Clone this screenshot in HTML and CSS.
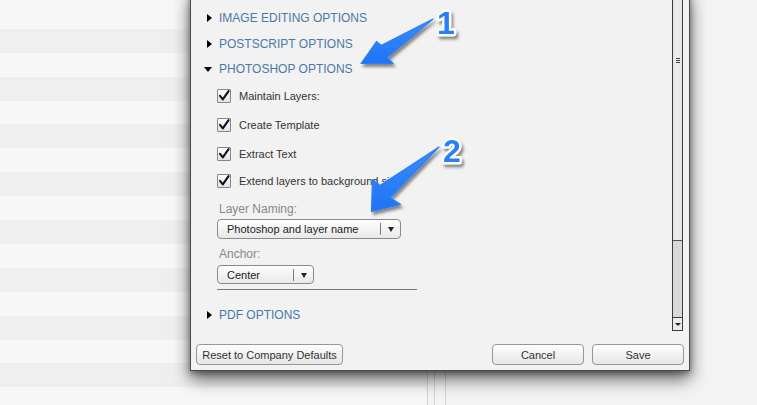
FILE: index.html
```html
<!DOCTYPE html>
<html>
<head>
<meta charset="utf-8">
<link rel="stylesheet" href="styles.css">
</head>
<body>
<div class="page">
  <div class="list"></div>
  <div class="splitter"></div>
  <div class="gutter"></div>
  <div class="main"></div>
</div>

<div class="dialog">
  <div class="panel">
    <div class="content">
      <div class="section"><span class="caret"><i class="tri-right"></i></span>IMAGE EDITING OPTIONS</div>
      <div class="section"><span class="caret"><i class="tri-right"></i></span>POSTSCRIPT OPTIONS</div>
      <div class="section section-open"><span class="caret"><i class="tri-down"></i></span>PHOTOSHOP OPTIONS</div>
      <div class="options">
        <label class="check"><span class="box"><svg width="14" height="14" viewBox="0 0 14 14"><path d="M3 6.8 L5.8 10.4 L11.6 2.2" fill="none" stroke="#111" stroke-width="2.1" stroke-linecap="round" stroke-linejoin="round"/></svg></span>Maintain Layers:</label>
        <label class="check"><span class="box"><svg width="14" height="14" viewBox="0 0 14 14"><path d="M3 6.8 L5.8 10.4 L11.6 2.2" fill="none" stroke="#111" stroke-width="2.1" stroke-linecap="round" stroke-linejoin="round"/></svg></span>Create Template</label>
        <label class="check"><span class="box"><svg width="14" height="14" viewBox="0 0 14 14"><path d="M3 6.8 L5.8 10.4 L11.6 2.2" fill="none" stroke="#111" stroke-width="2.1" stroke-linecap="round" stroke-linejoin="round"/></svg></span>Extract Text</label>
        <label class="check check-last"><span class="box"><svg width="14" height="14" viewBox="0 0 14 14"><path d="M3 6.8 L5.8 10.4 L11.6 2.2" fill="none" stroke="#111" stroke-width="2.1" stroke-linecap="round" stroke-linejoin="round"/></svg></span>Extend layers to background size</label>

        <div class="field-label">Layer Naming:</div>
        <div class="select select-wide"><span class="select-text">Photoshop and layer name</span><span class="select-sep"></span><span class="select-arrow"><i class="tri-small"></i></span></div>

        <div class="field-label field-label-gap">Anchor:</div>
        <div class="select select-narrow"><span class="select-text">Center</span><span class="select-sep"></span><span class="select-arrow"><i class="tri-small"></i></span></div>

        <div class="rule"></div>
      </div>
      <div class="section section-pdf"><span class="caret"><i class="tri-right"></i></span>PDF OPTIONS</div>
    </div>
    <div class="scrollbar">
      <div class="thumb"><div class="grip"></div></div>
      <div class="track"></div>
      <div class="scroll-btn"><i class="tri-tiny"></i></div>
    </div>
  </div>
  <div class="footer">
    <button class="btn btn-reset">Reset to Company Defaults</button>
    <div class="footer-right">
      <button class="btn btn-action">Cancel</button>
      <button class="btn btn-action">Save</button>
    </div>
  </div>
</div>

<svg class="annotations" width="757" height="405" viewBox="0 0 757 405">
  <defs>
    <filter id="shadow" x="-20%" y="-20%" width="140%" height="140%">
      <feDropShadow dx="2" dy="3" stdDeviation="1.8" flood-color="#000" flood-opacity="0.45"/>
    </filter>
    <linearGradient id="blue" x1="0" y1="0" x2="0" y2="1">
      <stop offset="0" stop-color="#3a8cff"/>
      <stop offset="1" stop-color="#1f74f2"/>
    </linearGradient>
  </defs>
  <g filter="url(#shadow)">
    <path d="M361 63.5 L376.5 41.5 L381 45.5 L433 19 L387 57.5 L393 63.5 Z" fill="url(#blue)" stroke="#2a7ef8" stroke-width="1.2" stroke-linejoin="round"/>
    <path d="M371.5 211.5 L372.5 179.5 L380 185.5 L439 147 L390 197.5 L400.5 204.5 Z" fill="url(#blue)" stroke="#2a7ef8" stroke-width="1.2" stroke-linejoin="round"/>
    <text x="437" y="34" class="num">1</text>
    <text x="443" y="162" class="num">2</text>
  </g>
</svg>
</body>
</html>
```

FILE: styles.css
```css
html, body {
  margin: 0;
  padding: 0;
}

body {
  width: 757px;
  height: 405px;
  overflow: hidden;
  position: relative;
  font-family: "Liberation Sans", Arial, sans-serif;
  background: #f3f3f3;
}

/* background page */
.page {
  display: flex;
  height: 405px;
}

.list {
  width: 427px;
  border-right: 1px solid #d2d2d2;
  background: repeating-linear-gradient(
    to bottom,
    #f7f7f7 0px,
    #f7f7f7 23.9px,
    #efefef 23.9px,
    #efefef 47.8px
  );
  background-position: 0 5px;
  background-color: #efefef;
}

.splitter {
  width: 6px;
  border-right: 1px solid #d2d2d2;
  background: #f3f3f3;
}

.gutter {
  width: 10px;
  border-right: 1px solid #d2d2d2;
  background: #f4f4f4;
}

.main {
  flex: 1;
  background: #f3f3f3;
}

/* dialog */
.dialog {
  position: absolute;
  left: 190px;
  top: -10px;
  width: 500px;
  height: 381px;
  box-sizing: border-box;
  border: 1px solid #4a4a4a;
  background: #f2f2f2;
  box-shadow: 0 8px 16px rgba(0, 0, 0, 0.6), 0 2px 6px rgba(0, 0, 0, 0.35);
  display: flex;
  flex-direction: column;
}

.panel {
  flex: 1;
  display: flex;
  padding-right: 6px;
  min-height: 0;
}

.content {
  flex: 1;
  padding-top: 14px;
}

.section {
  height: 26px;
  display: flex;
  align-items: center;
  padding-left: 13px;
  font-size: 12px;
  color: #4c78a8;
  white-space: nowrap;
}

.section-open {
  height: 24px;
}

.section-pdf {
  margin-top: 12px;
}

.caret {
  width: 15px;
  height: 10px;
  display: flex;
  align-items: center;
  justify-content: flex-end;
  padding-right: 7px;
  box-sizing: border-box;
}

.tri-right {
  display: block;
  width: 0;
  height: 0;
  border-left: 5px solid #000;
  border-top: 4px solid transparent;
  border-bottom: 4px solid transparent;
}

.tri-down {
  display: block;
  width: 0;
  height: 0;
  border-top: 5px solid #000;
  border-left: 4px solid transparent;
  border-right: 4px solid transparent;
  margin-top: 1px;
}

.options {
  padding-left: 26px;
  display: flex;
  flex-direction: column;
  align-items: flex-start;
}

.check {
  height: 29px;
  display: flex;
  align-items: center;
  gap: 8px;
  font-size: 11px;
  color: #333;
  white-space: nowrap;
}

.check-last {
  height: 28px;
  margin-top: -1px;
}

.box {
  width: 14px;
  height: 14px;
  box-sizing: border-box;
  border: 1px solid #868686;
  border-radius: 1px;
  background: linear-gradient(#ffffff, #e2e2e2);
  position: relative;
}

.box svg {
  position: absolute;
  left: -1px;
  top: -1px;
}

.field-label {
  margin-left: 2px;
  margin-top: 4px;
  height: 20px;
  line-height: 20px;
  font-size: 12px;
  color: #888;
}

.field-label-gap {
  margin-top: 5px;
}

.select {
  height: 20px;
  box-sizing: border-box;
  border: 1px solid #8a8a8a;
  border-radius: 4px;
  background: linear-gradient(#fefefe, #e8e8e8);
  display: flex;
  align-items: center;
  font-size: 11px;
  color: #222;
}

.select-wide {
  width: 184px;
}

.select-narrow {
  width: 97px;
  height: 19px;
  margin-top: 1px;
}

.select-text {
  flex: 1;
  padding-left: 9px;
  white-space: nowrap;
}

.select-sep {
  width: 1px;
  height: 12px;
  background: #7a7a7a;
}

.select-arrow {
  width: 19px;
  display: flex;
  justify-content: center;
  align-items: center;
}

.tri-small {
  display: block;
  width: 0;
  height: 0;
  border-top: 5px solid #222;
  border-left: 3.5px solid transparent;
  border-right: 3.5px solid transparent;
  margin-top: 1px;
}

.rule {
  width: 200px;
  height: 1px;
  background: #777;
  margin-top: 5px;
}

/* scrollbar */
.scrollbar {
  width: 11px;
  box-sizing: border-box;
  border-left: 1px solid #3c3c3c;
  border-right: 1px solid #3c3c3c;
  border-bottom: 1px solid #3c3c3c;
  display: flex;
  flex-direction: column;
}

.thumb {
  height: 250px;
  box-sizing: border-box;
  border-bottom: 1px solid #555;
  background: linear-gradient(to right, #e2e2e2, #ededed 40%, #e6e6e6);
  padding-top: 67px;
}

.grip {
  width: 4px;
  height: 5px;
  margin-left: 3px;
  background: repeating-linear-gradient(to bottom, #444 0px, #444 1px, transparent 1px, transparent 2px);
}

.track {
  flex: 1;
  background: #d9d9d9;
}

.scroll-btn {
  height: 13px;
  box-sizing: border-box;
  border-top: 1px solid #3c3c3c;
  background: #ebebeb;
  display: flex;
  justify-content: center;
  align-items: center;
}

.tri-tiny {
  display: block;
  width: 0;
  height: 0;
  border-top: 3px solid #222;
  border-left: 3px solid transparent;
  border-right: 3px solid transparent;
}

/* footer */
.footer {
  display: flex;
  justify-content: space-between;
  padding: 13px 5px 5px 5px;
}

.footer-right {
  display: flex;
  gap: 8px;
}

.btn {
  height: 21px;
  box-sizing: border-box;
  border: 1px solid #979797;
  border-radius: 4px;
  background: linear-gradient(#fefefe, #e6e6e6);
  font-family: "Liberation Sans", Arial, sans-serif;
  font-size: 11px;
  color: #333;
  padding: 0;
  margin: 0;
  white-space: nowrap;
}

.btn-reset {
  width: 147px;
}

.btn-action {
  width: 92px;
}

/* annotations */
.annotations {
  position: absolute;
  left: 0;
  top: 0;
  pointer-events: none;
}

.num {
  font-family: "Liberation Sans", Arial, sans-serif;
  font-weight: bold;
  font-size: 32px;
  fill: #2a7ef8;
  stroke: #ffffff;
  stroke-width: 4.5px;
  stroke-linejoin: round;
  paint-order: stroke;
}
```
